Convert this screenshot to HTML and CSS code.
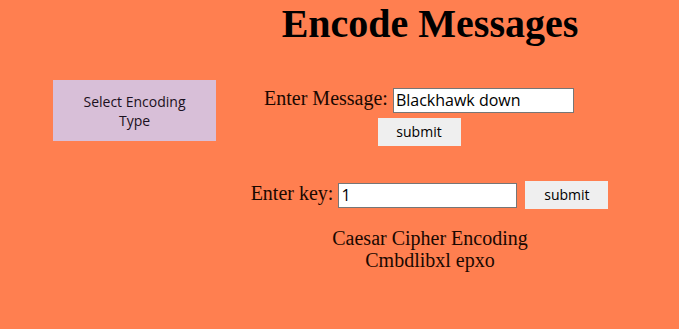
FILE: index.html
```
<!doctype html>
<html lang="en">
  <head>
    <meta charset="UTF-8" />
    <title>Encode Messages</title>
    <link rel="stylesheet" href="styles.css">
  </head>

  <body>
    <div class="page">
      <div class="sidebar">
        <button class="type-btn">Select Encoding Type</button>
      </div>

      <div class="main">
        <h1>Encode Messages</h1>

        <form class="message-form">
          <label>Enter Message: <input type="text" class="text-input" value="Blackhawk down" /></label>
          <div>
            <button type="button" class="submit-btn">submit</button>
          </div>
        </form>

        <form class="key-form">
          <label>Enter key: <input type="text" class="text-input key-input" value="1" /></label>
          <button type="button" class="submit-btn">submit</button>
        </form>

        <div class="result">
          <div>Caesar Cipher Encoding</div>
          <div>Cmbdlibxl epxo</div>
        </div>
      </div>
    </div>
  </body>
</html>
```

FILE: styles.css
```
body {
  margin: 0;
  background: #ff7f50;
  font-family: 'Liberation Serif', 'Times New Roman', serif;
  color: #1a0800;
  font-size: 20px;
}

.page {
  display: flex;
  height: 329px;
}

.sidebar {
  width: 216px;
  flex-shrink: 0;
  padding-top: 80px;
  box-sizing: border-box;
}

.type-btn {
  margin-left: 53px;
  width: 163px;
  height: 61px;
  border: none;
  background: #d8bfd8;
  color: #1a1020;
  font-family: 'Open Sans', 'Noto Sans', sans-serif;
  font-size: 14px;
  padding: 0 20px;
}

.main {
  flex: 1;
  padding-right: 35px;
  text-align: center;
}

h1 {
  margin: 0;
  font-size: 40px;
  color: #000;
}

.message-form {
  margin-top: 40px;
  padding-right: 22px;
}

.text-input {
  height: 25px;
  box-sizing: border-box;
  border: 1px solid #767676;
  padding: 1px 2px;
  font-family: 'Open Sans', 'Noto Sans', sans-serif;
  font-size: 16px;
  color: #000;
  background: #fff;
  vertical-align: middle;
}

.message-form .text-input {
  width: 181px;
}

.key-input {
  width: 179px;
}

.submit-btn {
  width: 83px;
  height: 28px;
  margin-top: 5px;
  border: none;
  background: #efefef;
  font-family: 'Open Sans', 'Noto Sans', sans-serif;
  font-size: 14px;
  color: #000;
}

.key-form {
  margin-top: 35px;
  padding-right: 1px;
  display: flex;
  justify-content: center;
  align-items: center;
  gap: 8px;
}

.key-form .submit-btn {
  margin-top: 0;
}

.result {
  margin-top: 18px;
  line-height: 22px;
}
```
